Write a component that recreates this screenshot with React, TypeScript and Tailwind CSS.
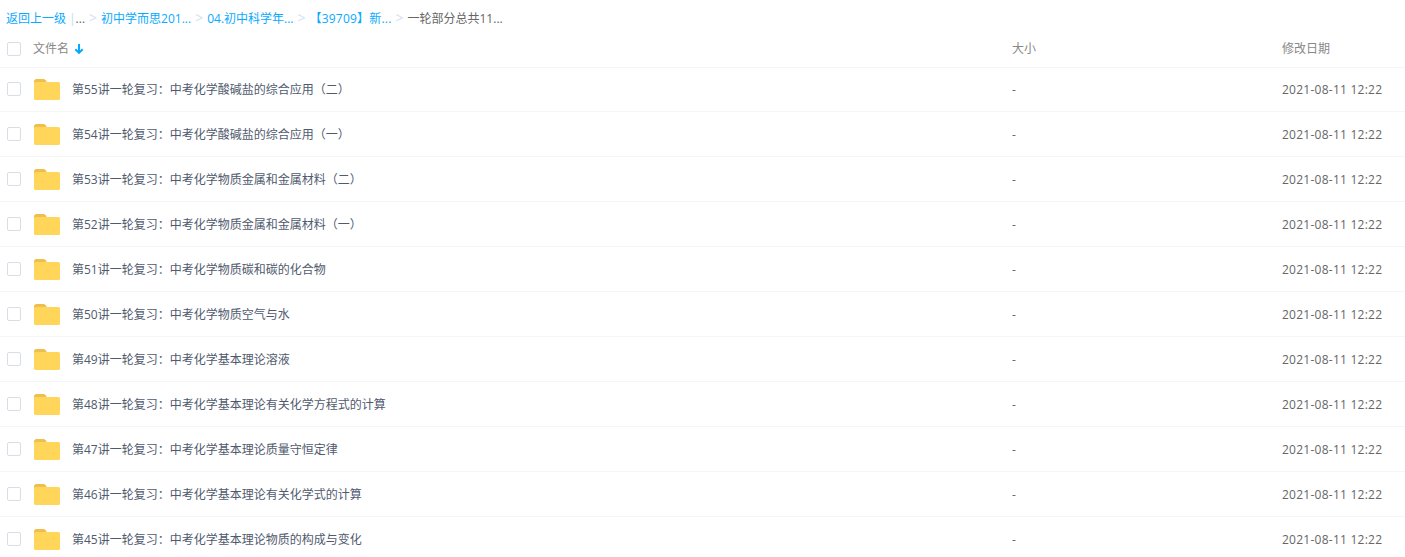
import React from 'react';

const files = [
  '第55讲一轮复习：中考化学酸碱盐的综合应用（二）',
  '第54讲一轮复习：中考化学酸碱盐的综合应用（一）',
  '第53讲一轮复习：中考化学物质金属和金属材料（二）',
  '第52讲一轮复习：中考化学物质金属和金属材料（一）',
  '第51讲一轮复习：中考化学物质碳和碳的化合物',
  '第50讲一轮复习：中考化学物质空气与水',
  '第49讲一轮复习：中考化学基本理论溶液',
  '第48讲一轮复习：中考化学基本理论有关化学方程式的计算',
  '第47讲一轮复习：中考化学基本理论质量守恒定律',
  '第46讲一轮复习：中考化学基本理论有关化学式的计算',
  '第45讲一轮复习：中考化学基本理论物质的构成与变化',
];

const Checkbox = () => (
  <span className="block h-[14px] w-[14px] rounded-[2px] border border-[#d8dde6] bg-white" />
);

const FolderIcon = () => (
  <svg width="28" height="24" viewBox="0 0 28 24" className="block">
    <path d="M1 4.5C1 3 2 2 3.4 2h6.6c1.4 0 2.3.5 3 1.6L14 6H1z" fill="#eebf4c" />
    <rect x="1" y="5" width="26" height="18" rx="1.6" fill="#ffd659" />
  </svg>
);

const Sep = () => (
  <span className="mx-[4px] text-[14px] text-[#d3dff3]">&gt;</span>
);

const App: React.FC = () => {
  return (
    <div className="h-[557px] w-[1405px] overflow-hidden bg-white font-['Open_Sans','Noto_Sans_CJK_SC',sans-serif] text-xs text-[#666]">
      <div className="flex h-[36px] items-center whitespace-nowrap pl-[6px] pt-[1px] text-[#09aaff]">
        <span>返回上一级</span>
        <span className="ml-[3px] text-[#c4d8f4]">|</span>
        <span className="text-[#666]">...</span>
        <Sep />
        <span>初中学而思201...</span>
        <Sep />
        <span>04.初中科学年...</span>
        <Sep />
        <span className="tracking-[0.2px]">【39709】新...</span>
        <Sep />
        <span className="text-[#666]">一轮部分总共11...</span>
      </div>
      <div className="flex h-[32px] items-center border-b border-[#f4f5f8] pb-[5px] text-[#888]">
        <div className="flex w-[33px] pl-[7px]">
          <Checkbox />
        </div>
        <div className="flex w-[979px] items-center">
          <span>文件名</span>
          <svg width="10" height="12" viewBox="0 0 10 12" className="ml-[5px]">
            <path d="M5 1v9M1.3 6.2 5 9.9l3.7-3.7" fill="none" stroke="#06a7ff" strokeWidth="2" />
          </svg>
        </div>
        <div className="w-[270px]">大小</div>
        <div>修改日期</div>
      </div>
      {files.map((name, i) => (
        <div
          key={name}
          className={`flex items-center border-b border-[#f4f5f8] ${i === 0 ? 'h-[44px] pb-[1px]' : 'h-[45px]'}`}
        >
          <div className="flex w-[33px] pl-[7px]">
            <Checkbox />
          </div>
          <div className="w-[39px]">
            <FolderIcon />
          </div>
          <div className="mt-[2px] w-[940px] text-[#505a6e]">{name}</div>
          <div className="mt-[2px] w-[270px]">-</div>
          <div className="mt-[2px] tracking-[0.25px]">2021-08-11 12:22</div>
        </div>
      ))}
    </div>
  );
};

export default App;
